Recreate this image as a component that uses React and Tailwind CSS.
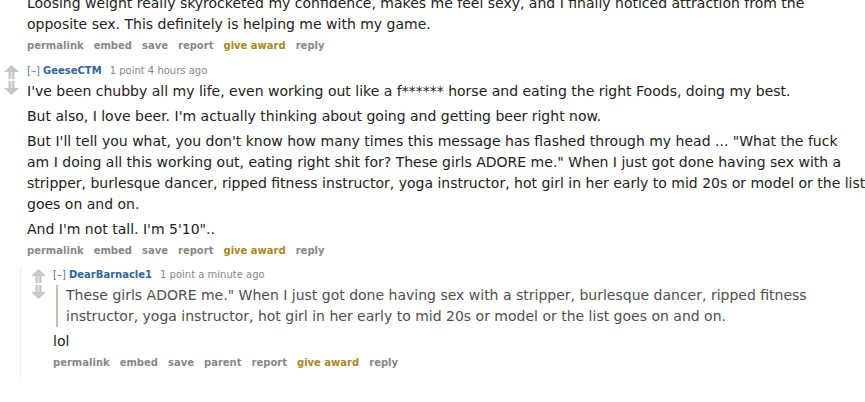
import React from 'react';

const Arrows = () => (
  <div className="flex flex-col gap-[2px] pt-[1px]">
    <svg width="15" height="14" viewBox="0 0 15 14">
      <polygon points="7.5,0 15,7 10.5,7 10.5,14 4.5,14 4.5,7 0,7" fill="#c6c6c6" />
      <rect x="6.5" y="7" width="2" height="7" fill="#e2e2e2" />
    </svg>
    <svg width="15" height="14" viewBox="0 0 15 14">
      <polygon points="7.5,14 15,7 10.5,7 10.5,0 4.5,0 4.5,7 0,7" fill="#c6c6c6" />
      <rect x="6.5" y="0" width="2" height="7" fill="#e2e2e2" />
    </svg>
  </div>
);

const Buttons = ({ items }) => (
  <ul className="flex gap-[10px] text-[10px] font-bold leading-[14px] text-[#888]">
    {items.map((b) => (
      <li key={b} className={b === 'give award' ? 'text-[#a68a1c]' : ''}>{b}</li>
    ))}
  </ul>
);

const Tagline = ({ author, meta }) => (
  <p className="text-[10px] leading-[14px] text-[#888] whitespace-nowrap">
    <span className="text-[#5a74a6]">[–]</span>{' '}
    <span className="font-bold text-[#369]">{author}</span>
    <span className="ml-[8px]">{meta}</span>
  </p>
);

const Lines = ({ lines, className = '' }) => (
  <p className={`mb-1 whitespace-nowrap leading-[21px] ${className}`}>
    {lines.map((l, i) => (
      <span key={i} className="block">{l}</span>
    ))}
  </p>
);

export default function App() {
  return (
    <div className="w-[865px] h-[402px] overflow-hidden bg-white text-[14px] text-[#222] font-['Verdana','DejaVu_Sans',sans-serif]">
      <div className="pl-[27px] -mt-[7px]">
        <Lines
          lines={[
            'Loosing weight really skyrocketed my confidence, makes me feel sexy, and I finally noticed attraction from the',
            'opposite sex. This definitely is helping me with my game.',
          ]}
        />
        <Buttons items={['permalink', 'embed', 'save', 'report', 'give award', 'reply']} />
      </div>

      <div className="flex mt-[11px]">
        <div className="w-[27px] pl-[4px] shrink-0">
          <Arrows />
        </div>
        <div>
          <Tagline author="GeeseCTM" meta="1 point 4 hours ago" />
          <div className="mt-[3px]">
            <Lines lines={["I've been chubby all my life, even working out like a f****** horse and eating the right Foods, doing my best."]} />
            <Lines lines={["But also, I love beer. I'm actually thinking about going and getting beer right now."]} />
            <Lines
              lines={[
                'But I\'ll tell you what, you don\'t know how many times this message has flashed through my head ... "What the fuck',
                'am I doing all this working out, eating right shit for? These girls ADORE me." When I just got done having sex with a',
                'stripper, burlesque dancer, ripped fitness instructor, yoga instructor, hot girl in her early to mid 20s or model or the list',
                'goes on and on.',
              ]}
            />
            <Lines lines={['And I\'m not tall. I\'m 5\'10"..']} />
          </div>
          <Buttons items={['permalink', 'embed', 'save', 'report', 'give award', 'reply']} />
        </div>
      </div>

      <div className="ml-[20px] mt-[10px] border-l border-dotted border-[#ddf] pl-[6px] pb-[10px]">
        <div className="flex">
          <div className="w-[26px] pl-[4px] shrink-0">
            <Arrows />
          </div>
          <div>
            <Tagline author="DearBarnacle1" meta="1 point a minute ago" />
            <div className="mt-[3px]">
              <blockquote className="ml-[3px] mb-1 border-l-2 border-[#c5c1ad] pl-[8px] text-[#4f4f4f]">
                <p className="whitespace-nowrap leading-[21px]">
                  <span className="block">These girls ADORE me." When I just got done having sex with a stripper, burlesque dancer, ripped fitness</span>
                  <span className="block">instructor, yoga instructor, hot girl in her early to mid 20s or model or the list goes on and on.</span>
                </p>
              </blockquote>
              <Lines lines={['lol']} />
            </div>
            <Buttons items={['permalink', 'embed', 'save', 'parent', 'report', 'give award', 'reply']} />
          </div>
        </div>
      </div>
    </div>
  );
}
